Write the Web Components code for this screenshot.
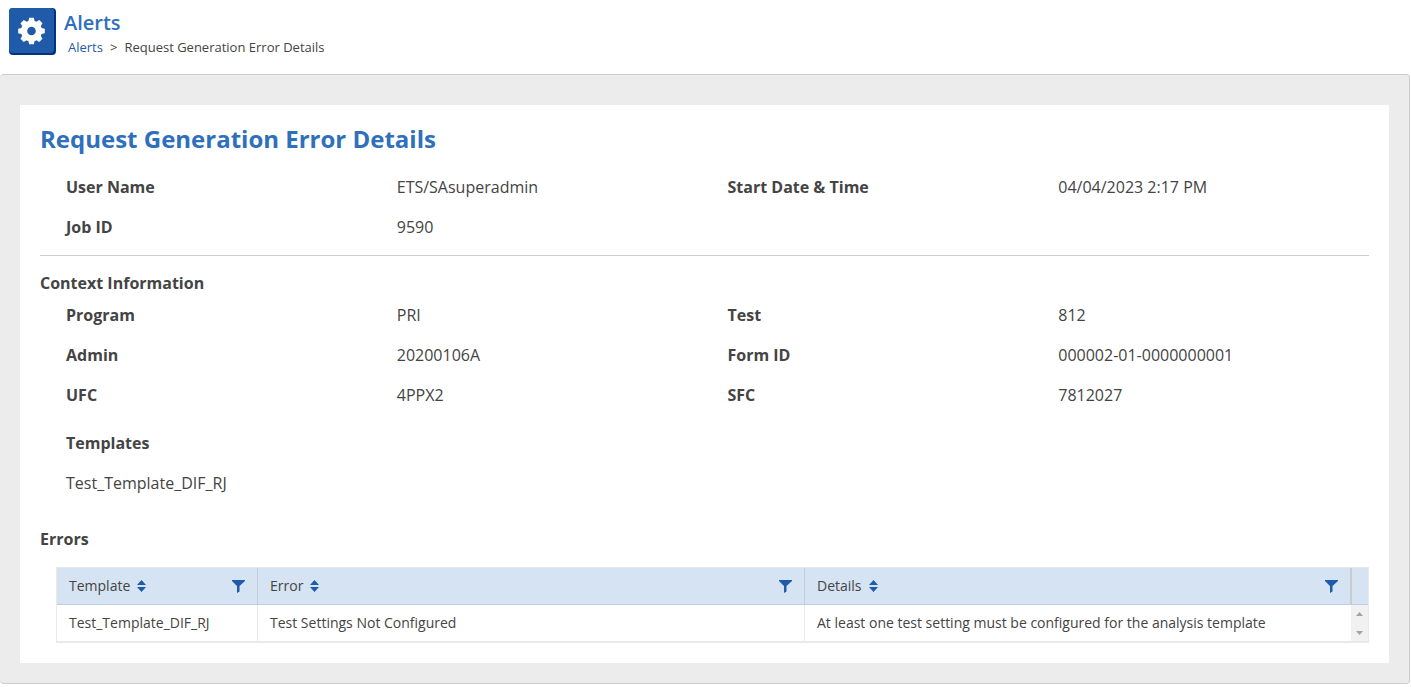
<!DOCTYPE html>
<html lang="en">
<head>
<meta charset="utf-8">
<title>Alerts - Request Generation Error Details</title>
<style>
  body {
    margin: 0;
    background: #fff;
    color: #444;
    font: 16px/24px "Open Sans", "Noto Sans", sans-serif;
  }
</style>
</head>
<body>
<page-header heading="Alerts">
  <bread-crumbs parent="Alerts" current="Request Generation Error Details"></bread-crumbs>
</page-header>
<page-panel>
  <detail-card heading="Request Generation Error Details">
    <field-grid ruled>
      <field-item label="User Name">ETS/SAsuperadmin</field-item>
      <field-item label="Start Date &amp; Time">04/04/2023 2:17 PM</field-item>
      <field-item label="Job ID">9590</field-item>
    </field-grid>
    <section-title>Context Information</section-title>
    <field-grid>
      <field-item label="Program">PRI</field-item>
      <field-item label="Test">812</field-item>
      <field-item label="Admin">20200106A</field-item>
      <field-item label="Form ID">000002-01-0000000001</field-item>
      <field-item label="UFC">4PPX2</field-item>
      <field-item label="SFC">7812027</field-item>
    </field-grid>
    <template-list label="Templates">Test_Template_DIF_RJ</template-list>
    <section-title>Errors</section-title>
    <error-table></error-table>
  </detail-card>
</page-panel>

<script>
const define = (name, render) => customElements.define(name, class extends HTMLElement {
  constructor() {
    super();
    this.attachShadow({ mode: "open" });
  }
  connectedCallback() {
    const template = document.createElement("template");
    template.innerHTML = render(this);
    this.shadowRoot.replaceChildren(template.content.cloneNode(true));
    this.shadowRoot.querySelectorAll("[data-text]").forEach(node => {
      node.textContent = this.getAttribute(node.dataset.text);
    });
  }
});

define("gear-badge", () => `
  <style>
    :host { display: block; width: 47px; height: 47px; }
    svg { display: block; }
  </style>
  <svg width="47" height="47" viewBox="0 0 47 47" aria-hidden="true">
    <rect width="47" height="47" rx="4" fill="#00337f"/>
    <rect width="45" height="45" rx="4" fill="#1f5ba9"/>
    <g transform="translate(22.5 23)" fill="#fff">
      <circle r="10.5"/>
      <g id="teeth">
        <path id="tooth" d="M-3.3-9 L-2.3-13.3 H2.3 L3.3-9Z"/>
        <use href="#tooth" transform="rotate(45)"/>
        <use href="#tooth" transform="rotate(90)"/>
        <use href="#tooth" transform="rotate(135)"/>
      </g>
      <use href="#teeth" transform="rotate(180)"/>
      <circle r="4.3" fill="#1f5ba9"/>
    </g>
  </svg>`);

define("page-header", () => `
  <style>
    :host { display: flex; gap: 8px; padding: 8px 9px 18px; }
    h2 { margin: 0; font-size: 20px; font-weight: 600; line-height: 30px; color: #2f70bc; }
  </style>
  <gear-badge></gear-badge>
  <div><h2 data-text="heading"></h2><slot></slot></div>`);

define("bread-crumbs", () => `
  <style>
    :host { display: block; padding-left: 4px; font-size: 13px; line-height: 18px; }
    nav { display: flex; gap: 7px; }
    a { color: #1f5ba9; text-decoration: none; }
  </style>
  <nav aria-label="Breadcrumb"><a href="#" data-text="parent"></a><span>&gt;</span><span data-text="current"></span></nav>`);

define("page-panel", () => `
  <style>
    :host {
      display: block; margin-right: 1px; padding: 30px 20px 20px;
      background: #ececec; border: 1px solid #ccc; border-left: 0; border-radius: 4px;
    }
  </style>
  <slot></slot>`);

define("detail-card", () => `
  <style>
    :host { display: block; padding: 18px 0 20px; background: #fff; }
    h1 { margin: 0 20px 12px; font-size: 24px; line-height: 32px; color: #2f70bc; }
  </style>
  <h1 data-text="heading"></h1><slot></slot>`);

define("section-title", () => `
  <style>
    :host { display: block; margin: 0 20px; }
    h3 { margin: 0; font-size: 16px; line-height: 24px; }
  </style>
  <h3><slot></slot></h3>`);

define("field-grid", () => `
  <style>
    :host { display: block; }
    .grid { display: grid; grid-template-columns: 1fr 1fr; grid-auto-rows: 40px; padding-left: 46px; }
    hr { display: none; margin: 8px 20px 15px; border: 0; border-top: 1px solid #ccc; }
    :host([ruled]) hr { display: block; }
  </style>
  <div class="grid"><slot></slot></div><hr>`);

define("field-item", () => `
  <style>
    :host { display: grid; grid-template-columns: 1fr 1fr; align-items: center; }
  </style>
  <b data-text="label"></b><span><slot></slot></span>`);

define("template-list", () => `
  <style>
    :host { display: block; padding: 8px 46px 24px; line-height: 40px; }
    b { display: block; }
  </style>
  <b data-text="label"></b><slot></slot>`);

define("column-head", () => `
  <style>
    :host { display: flex; align-items: center; gap: 7px; font-weight: 400; }
    button { display: flex; padding: 0; border: 0; background: none; color: #1f5ba9; }
    .filter { margin-left: auto; }
    svg { display: block; fill: currentColor; }
  </style>
  <span><slot></slot></span>
  <button aria-label="Sort"><svg width="9" height="12" viewBox="0 0 9 12"><path d="M4.5 0 9 5H0ZM0 7H9L4.5 12Z"/></svg></button>
  <button class="filter" aria-label="Filter"><svg width="13" height="13" viewBox="0 0 13 13"><path d="M0 0H13V1L7.5 6V11.5L5 13V6L0 1Z"/></svg></button>`);

define("scroll-arrows", () => `
  <style>
    :host { display: flex; flex-direction: column; align-items: center; justify-content: space-between; height: 36px; box-sizing: border-box; margin-left: -1px; padding: 7px 0 6px; background: #f1f1f1; }
    svg { display: block; fill: #a3a3a3; }
  </style>
  <svg width="7" height="4" viewBox="0 0 7 4"><path d="M0 4 3.5 0 7 4Z"/></svg>
  <svg width="7" height="4" viewBox="0 0 7 4"><path d="M0 0 3.5 4 7 0Z"/></svg>`);

define("error-table", () => `
  <style>
    :host { display: block; margin: 16px 20px 0 36px; border: 1px solid #e9e9e9; font-size: 14px; line-height: 20px; }
    table { width: 100%; table-layout: fixed; border-collapse: separate; border-spacing: 0; }
    .template { width: 201px; }
    .scroll { width: 16px; }
    th, td { box-sizing: border-box; height: 37px; padding: 0 12px; text-align: left; border-right: 1px solid #e9e9e9; }
    th { background: #d6e3f3; border-right-color: #bfcddd; border-bottom: 1px solid #bfcddd; }
    th:nth-child(3) { border-right: 2px solid #c8cbd0; }
    td { border-bottom: 1px solid #e9e9e9; }
    td:nth-child(3) { border-right-color: #f1f1f1; }
    th:last-child, td:last-child { padding: 0; border-right: 0; }
  </style>
  <table>
    <colgroup><col class="template"><col><col><col class="scroll"></colgroup>
    <thead><tr>
      <th><column-head>Template</column-head></th>
      <th><column-head>Error</column-head></th>
      <th><column-head>Details</column-head></th>
      <th></th>
    </tr></thead>
    <tbody><tr>
      <td>Test_Template_DIF_RJ</td>
      <td>Test Settings Not Configured</td>
      <td>At least one test setting must be configured for the analysis template</td>
      <td><scroll-arrows></scroll-arrows></td>
    </tr></tbody>
  </table>`);
</script>
</body>
</html>
